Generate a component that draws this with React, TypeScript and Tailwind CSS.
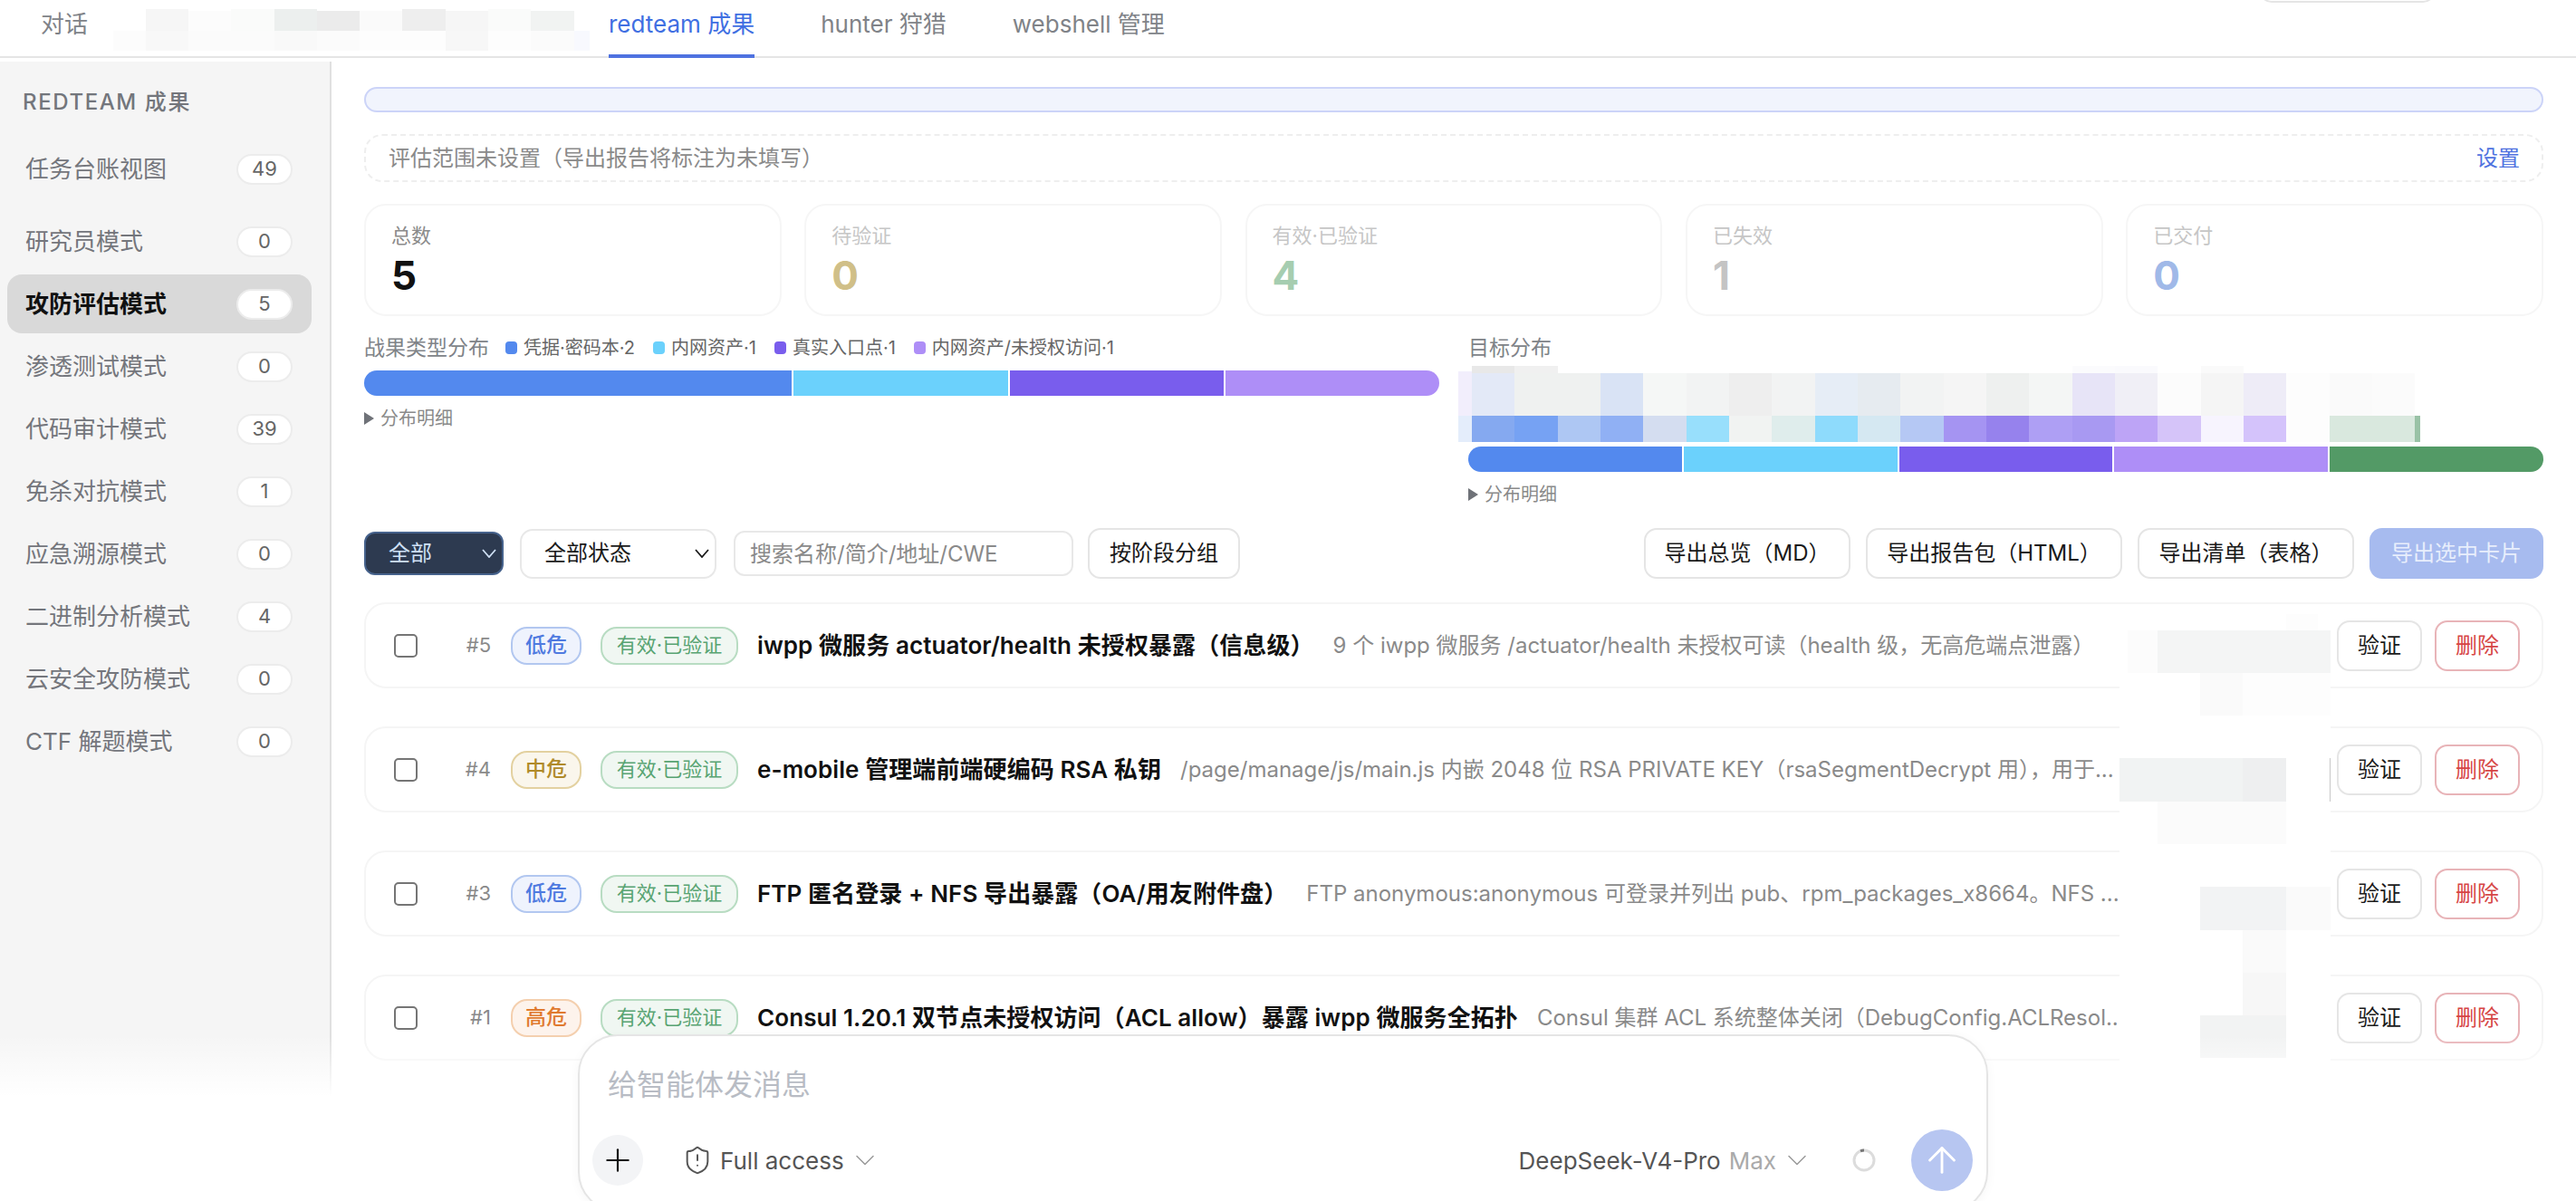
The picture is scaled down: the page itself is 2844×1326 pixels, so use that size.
import React from 'react';
import { ArrowUp, ChevronDown, Plus, ShieldAlert } from 'lucide-react';

type Rect = [number, number, number, number, string];

const MODES = [
  { name: '任务台账视图', count: 49 },
  { name: '研究员模式', count: 0 },
  { name: '攻防评估模式', count: 5, active: true },
  { name: '渗透测试模式', count: 0 },
  { name: '代码审计模式', count: 39 },
  { name: '免杀对抗模式', count: 1 },
  { name: '应急溯源模式', count: 0 },
  { name: '二进制分析模式', count: 4 },
  { name: '云安全攻防模式', count: 0 },
  { name: 'CTF 解题模式', count: 0 },
];

const STATS = [
  { label: '总数', value: 5, labelCls: 'text-[#8b8b8b]', valueCls: 'text-[#111111]' },
  { label: '待验证', value: 0, labelCls: 'text-[#c6c6c6]', valueCls: 'text-[#d0bf88]' },
  { label: '有效·已验证', value: 4, labelCls: 'text-[#c6c6c6]', valueCls: 'text-[#a6cdb0]' },
  { label: '已失效', value: 1, labelCls: 'text-[#c6c6c6]', valueCls: 'text-[#c4c4c4]' },
  { label: '已交付', value: 0, labelCls: 'text-[#c6c6c6]', valueCls: 'text-[#a0b9e8]' },
];

const LEGEND = [
  { label: '凭据·密码本·2', dot: 'bg-[#5389ee]' },
  { label: '内网资产·1', dot: 'bg-[#6bd1fc]' },
  { label: '真实入口点·1', dot: 'bg-[#795ded]' },
  { label: '内网资产/未授权访问·1', dot: 'bg-[#ae8ef7]' },
];

const SEVERITY = {
  low: { label: '低危', cls: 'bg-[#eff3fd] border-[#b2c7f0] text-[#4f7ae0]' },
  mid: { label: '中危', cls: 'bg-[#faf6ec] border-[#e3d1a0] text-[#b08a2a]' },
  high: { label: '高危', cls: 'bg-[#fdf3ec] border-[#f4cfae] text-[#e07a30]' },
};

const FINDINGS = [
  {
    id: 5,
    severity: SEVERITY.low,
    title: 'iwpp 微服务 actuator/health 未授权暴露（信息级）',
    desc: '9 个 iwpp 微服务 /actuator/health 未授权可读（health 级，无高危端点泄露）',
  },
  {
    id: 4,
    severity: SEVERITY.mid,
    title: 'e-mobile 管理端前端硬编码 RSA 私钥',
    desc: '/page/manage/js/main.js 内嵌 2048 位 RSA PRIVATE KEY（rsaSegmentDecrypt 用），用于...',
  },
  {
    id: 3,
    severity: SEVERITY.low,
    title: 'FTP 匿名登录 + NFS 导出暴露（OA/用友附件盘）',
    desc: 'FTP anonymous:anonymous 可登录并列出 pub、rpm_packages_x8664。NFS ...',
  },
  {
    id: 1,
    severity: SEVERITY.high,
    title: 'Consul 1.20.1 双节点未授权访问（ACL allow）暴露 iwpp 微服务全拓扑',
    desc: 'Consul 集群 ACL 系统整体关闭（DebugConfig.ACLResol...',
  },
];

const EXPORTS = [
  { label: '导出总览（MD）', cls: 'w-[228px]' },
  { label: '导出报告包（HTML）', cls: 'w-[283px]' },
  { label: '导出清单（表格）', cls: 'w-[239px]' },
];

// redacted patches: real coordinates of the page
const TAB_PATCH: Rect[] = [
  [160, 10, 47, 24, '#f6f6f6'],
  [207, 12, 47, 22, '#fcfcfc'],
  [254, 10, 48, 24, '#fafbfa'],
  [302, 10, 47, 24, '#ecefee'],
  [349, 12, 47, 22, '#ebebeb'],
  [396, 12, 47, 22, '#fafafa'],
  [443, 10, 48, 24, '#eeeeee'],
  [491, 12, 47, 22, '#f6f6f6'],
  [538, 10, 47, 24, '#fafbfa'],
  [585, 12, 48, 22, '#f1f3f2'],
  [124, 34, 36, 22, '#fcfcfc'],
  [160, 34, 47, 22, '#f8f8f8'],
  [207, 34, 95, 22, '#fbfbfb'],
  [302, 34, 47, 22, '#f9f9f9'],
  [349, 34, 47, 22, '#fbfbfb'],
  [396, 34, 95, 22, '#fdfdfd'],
  [491, 34, 47, 22, '#f7f7f7'],
  [538, 34, 47, 22, '#fdfdfd'],
  [585, 34, 48, 22, '#fbfbfb'],
  [633, 34, 17, 22, '#f8f9fe'],
];

const TARGET_TOP = ['#e3e9f7', '#eff1f0', '#eff1f0', '#d9e3f5', '#f5f7f6', '#f2f3f3', '#eeeeee', '#f2f3f3', '#e6edf6', '#e6ebf0', '#f2f3f3', '#f5f5f5', '#eef0ef', '#f4f6f5', '#e7e4f7', '#f0eff6', '#fcfcfc', '#f5f5f5', '#eeecf7', '#fdfdfd', '#fafafa', '#fbfbfb'];
const TARGET_BOTTOM = ['#85a9f0', '#76a2f3', '#aec7f3', '#90b0f4', '#d4ddf0', '#98dffc', '#f1f3f2', '#dfedec', '#8edbfc', '#d5e8f2', '#b5c8f4', '#a594f2', '#9682ed', '#ae9ff4', '#a899f2', '#bda4f6', '#d5c4f9', '#f7f4fe', '#d4c3fb', '#fdfdfd', '#d9e8de', '#d9e8de'];
const colX = (i: number) => 1625 + i * 47.33;
const TARGET_PATCH: Rect[] = [
  [1610, 410, 15, 49, '#f2eefc'],
  [1610, 459, 15, 29, '#e4edfb'],
  [colX(0), 404, 47.4, 8, '#e8e8e8'],
  [colX(1), 404, 47.4, 8, '#f0f0f0'],
  [colX(14), 404, 47.4, 8, '#fbfbfd'],
  [colX(15), 404, 47.4, 8, '#fafafd'],
  [colX(17), 404, 47.4, 8, '#fafafa'],
  ...TARGET_TOP.map((c, i): Rect => [colX(i), 412, 47.4, 47, c]),
  ...TARGET_BOTTOM.map((c, i): Rect => [colX(i), 459, 47.4, 29, c]),
  [2666, 459, 6, 29, '#99c2a6'],
];

const CARDS_PATCH: Rect[] = [
  [2340, 696, 233, 506, '#ffffff'],
  [2524, 678, 35, 18, '#fdfdfd'],
  [2349, 696, 33, 47, '#fcfcfc'],
  [2382, 696, 191, 47, '#f4f5f5'],
  [2429, 743, 47, 47, '#fafafa'],
  [2476, 743, 97, 47, '#fdfdfd'],
  [2340, 837, 136, 48, '#f1f3f3'],
  [2476, 837, 48, 48, '#eeeff0'],
  [2572, 837, 1, 48, '#c8c8c8'],
  [2382, 885, 142, 47, '#fbfbfb'],
  [2429, 979, 95, 48, '#f2f3f4'],
  [2524, 979, 49, 48, '#fafafa'],
  [2476, 1027, 48, 47, '#fafafa'],
  [2476, 1074, 48, 47, '#f7f7f7'],
  [2429, 1121, 95, 47, '#f2f3f3'],
];

function Patch({ rects, box, className }: { rects: Rect[]; box: string; className: string }) {
  return (
    <svg viewBox={box} className={className} shapeRendering="crispEdges" aria-hidden>
      {rects.map(([x, y, w, h, fill], i) => (
        <rect key={i} x={x} y={y} width={w} height={h} fill={fill} />
      ))}
    </svg>
  );
}

function SelectChevron() {
  return (
    <svg viewBox="0 0 16 10" className="h-[10px] w-[16px]" fill="none" stroke="currentColor" strokeWidth="1.8" aria-hidden>
      <path d="M1 1l7 8 7-8" />
    </svg>
  );
}

function Sidebar() {
  return (
    <aside className="w-[366px] shrink-0 border-r-2 border-[#e0e0e0] bg-[#f5f5f5] pl-[8px] pr-[20px] pt-[30px]">
      <div className="h-[30px] pl-[17px] text-[24px] leading-[30px] font-medium tracking-[1.6px] text-[#73767c]">REDTEAM 成果</div>
      <nav className="mt-[26px] flex flex-col gap-[4px]">
        {MODES.map((m, i) => (
          <div
            key={m.name}
            className={`flex h-[65px] items-center justify-between rounded-[16px] pl-[20px] pr-[21px] text-[26px] ${i === 0 ? 'mb-[11px]' : ''} ${
              m.active ? 'bg-[#d9d9d9] font-semibold text-[#111111]' : 'text-[#74767c]'
            }`}
          >
            <span>{m.name}</span>
            <span className="flex h-[34px] w-[62px] items-center justify-center rounded-full border-2 border-[#ececec] bg-white text-[22px] font-normal text-[#666666]">
              {m.count}
            </span>
          </div>
        ))}
      </nav>
    </aside>
  );
}

function StackedBar({ colors }: { colors: { cls: string; grow: string }[] }) {
  return (
    <div className="flex h-[28px] gap-[2px] overflow-hidden rounded-full">
      {colors.map((c, i) => (
        <div key={i} className={`${c.grow} ${c.cls}`} />
      ))}
    </div>
  );
}

function DetailToggle() {
  return (
    <div className="mt-[13px] flex h-[24px] items-center gap-[7px] text-[20px] text-[#8a8a8a]">
      <span className="h-0 w-0 border-y-[7px] border-l-[11px] border-y-transparent border-l-[#6f7278]" />
      分布明细
    </div>
  );
}

function FindingCard({ item }: { item: (typeof FINDINGS)[number] }) {
  return (
    <div className="flex h-[95px] shrink-0 items-center rounded-[24px] border-2 border-[#f5f5f5] bg-white pl-[31px] pr-[24px]">
      <input type="checkbox" className="h-[26px] w-[26px] shrink-0 appearance-none rounded-[5px] border-2 border-[#757575] bg-white" />
      <span className="w-[81px] shrink-0 text-right text-[22px] text-[#8a8a8a]">#{item.id}</span>
      <span className={`ml-[22px] flex h-[42px] w-[78px] shrink-0 items-center justify-center rounded-[18px] border-2 text-[23px] font-medium ${item.severity.cls}`}>
        {item.severity.label}
      </span>
      <span className="ml-[21px] flex h-[42px] w-[152px] shrink-0 items-center justify-center rounded-[18px] border-2 border-[#b8dcc2] bg-[#f0f7f2] text-[22px] text-[#58a472]">
        有效·已验证
      </span>
      <span className="ml-[21px] shrink-0 text-[26px] font-semibold tracking-[0.08px] text-[#111111]">{item.title}</span>
      <span className="ml-[21px] mr-[232px] min-w-0 flex-1 truncate text-[24px] text-[#8a8a8a]">{item.desc}</span>
      <div className="flex shrink-0 gap-[14px]">
        <button type="button" className="h-[56px] w-[94px] rounded-[14px] border-2 border-[#e5e5e5] bg-white text-[24px] text-[#1a1a1a]">
          验证
        </button>
        <button type="button" className="h-[56px] w-[94px] rounded-[14px] border-2 border-[#e8b4b8] bg-white text-[24px] text-[#d64545]">
          删除
        </button>
      </div>
    </div>
  );
}

function Composer() {
  return (
    <div className="absolute left-[638px] top-[1142px] z-20 flex h-[196px] w-[1557px] flex-col rounded-[44px] border-2 border-[#e5e5e5] bg-white shadow-[0_2px_12px_rgba(0,0,0,0.04)]">
      <textarea
        rows={1}
        readOnly
        placeholder="给智能体发消息"
        className="mt-[31px] ml-[31px] h-[46px] resize-none bg-transparent text-[32px] leading-[46px] outline-none placeholder:text-[#b8bcc4]"
      />
      <div className="mt-[26px] flex items-center pl-[14px] pr-[15px]">
        <button type="button" className="flex h-[56px] w-[56px] items-center justify-center rounded-full bg-[#f3f4f6] text-[#111111]">
          <Plus className="h-[40px] w-[40px]" strokeWidth={1.3} />
        </button>
        <ShieldAlert className="ml-[43px] h-[34px] w-[34px] text-[#555555]" strokeWidth={1.4} />
        <span className="ml-[8px] text-[26px] text-[#555555]">Full access</span>
        <ChevronDown className="ml-[5px] h-[36px] w-[36px] text-[#9a9a9a]" strokeWidth={1} />
        <div className="ml-auto flex items-center text-[26px]">
          <span className="text-[#555555]">DeepSeek-V4-Pro</span>
          <span className="ml-[9px] text-[#aaaaaa]">Max</span>
          <ChevronDown className="ml-[5px] h-[36px] w-[36px] text-[#9a9a9a]" strokeWidth={1} />
        </div>
        <svg viewBox="0 0 28 28" className="ml-[42px] h-[28px] w-[28px]" fill="none" aria-hidden>
          <circle cx="14" cy="14" r="11" stroke="#dcdcdc" strokeWidth="3" />
          <path d="M10 3.8a11 11 0 0 1 4-.8" stroke="#777777" strokeWidth="3" />
        </svg>
        <button type="button" className="ml-[38px] flex h-[68px] w-[68px] items-center justify-center rounded-full bg-[#b7c6f1] text-white">
          <ArrowUp className="h-[46px] w-[46px]" strokeWidth={1.5} />
        </button>
      </div>
    </div>
  );
}

export default function App() {
  return (
    <div className="relative flex h-screen w-full flex-col overflow-hidden bg-white [font-family:Inter,'Noto_Sans_CJK_SC',sans-serif]">
      {/* top tabs */}
      <header className="relative flex h-[64px] shrink-0 gap-[73px] border-b-2 border-[#e5e5e5] pl-[45px] text-[26px] text-[#808388]">
        <div className="flex h-[64px] items-center border-b-4 border-transparent pb-[8px]">对话</div>
        <div className="relative w-[429px]">
          <Patch rects={TAB_PATCH} box="124 10 526 46" className="absolute left-[-45px] top-[10px] h-[46px] w-[526px] max-w-none" />
        </div>
        <div className="flex h-[64px] items-center border-b-4 border-[#4f72e0] pb-[8px] text-[#3f6fe2]">redteam 成果</div>
        <div className="flex h-[64px] items-center border-b-4 border-transparent pb-[8px]">hunter 狩猎</div>
        <div className="flex h-[64px] items-center border-b-4 border-transparent pb-[8px]">webshell 管理</div>
        <div className="absolute left-[2494px] top-[-40px] h-[43px] w-[195px] rounded-[14px] border-2 border-[#e5e5e5]" />
      </header>

      <div className="mt-[4px] flex min-h-0 flex-1">
        <Sidebar />

        <main className="min-w-0 flex-1 overflow-hidden pl-[36px] pr-[36px] pt-[28px]">
          <div className="h-[28px] rounded-full border-2 border-[#ccd4f8] bg-[#f1f4fd]" />

          <div className="mt-[24px] flex h-[53px] items-center justify-between rounded-[20px] border-2 border-dashed border-[#eeeeee] pl-[25px] pr-[24px] text-[24px]">
            <span className="text-[#8a8a8a]">评估范围未设置（导出报告将标注为未填写）</span>
            <span className="text-[#4f72e0]">设置</span>
          </div>

          <div className="mt-[24px] grid h-[124px] grid-cols-5 gap-[25.5px]">
            {STATS.map(s => (
              <div key={s.label} className="rounded-[24px] border-2 border-[#f6f6f6] pl-[28px] pt-[20px]">
                <div className={`text-[22px] leading-[26px] ${s.labelCls}`}>{s.label}</div>
                <div className={`mt-[9px] text-[44px] leading-[44px] font-bold ${s.valueCls}`}>{s.value}</div>
              </div>
            ))}
          </div>

          <div className="mt-[23px] grid grid-cols-2 gap-x-[32px]">
            <div>
              <div className="flex h-[24px] items-center">
                <span className="mr-[18px] text-[23px] text-[#808388]">战果类型分布</span>
                {LEGEND.map(l => (
                  <span key={l.label} className="mr-[20px] flex items-center gap-[7px] text-[20px] text-[#666666]">
                    <span className={`h-[14px] w-[13px] rounded-[4px] ${l.dot}`} />
                    {l.label}
                  </span>
                ))}
              </div>
              <div className="mt-[13px]">
                <StackedBar
                  colors={[
                    { cls: 'bg-[#5389ee]', grow: 'flex-[2]' },
                    { cls: 'bg-[#6bd1fc]', grow: 'flex-1' },
                    { cls: 'bg-[#795ded]', grow: 'flex-1' },
                    { cls: 'bg-[#ae8ef7]', grow: 'flex-1' },
                  ]}
                />
              </div>
              <DetailToggle />
            </div>
            <div>
              <div className="flex h-[24px] items-center text-[23px] text-[#808388]">目标分布</div>
              <Patch rects={TARGET_PATCH} box="1610 404 1062 84" className="ml-[-11px] mt-[8px] h-[84px] w-[1062px] max-w-none" />
              <div className="mt-[5px]">
                <StackedBar
                  colors={[
                    { cls: 'bg-[#5389ee]', grow: 'flex-1' },
                    { cls: 'bg-[#6bd1fc]', grow: 'flex-1' },
                    { cls: 'bg-[#795ded]', grow: 'flex-1' },
                    { cls: 'bg-[#ae8ef7]', grow: 'flex-1' },
                    { cls: 'bg-[#539a66]', grow: 'flex-1' },
                  ]}
                />
              </div>
              <DetailToggle />
            </div>
          </div>

          {/* filters and exports */}
          <div className="mt-[25px] flex h-[56px] items-center text-[24px]">
            <button type="button" className="flex h-[48px] w-[154px] items-center justify-between rounded-[12px] border-2 border-[#46628c] bg-[#2d3a50] pl-[25px] pr-[6px] text-[#cfe0f5]">
              全部
              <SelectChevron />
            </button>
            <button type="button" className="ml-[18px] flex h-[55px] w-[217px] items-center justify-between rounded-[14px] border-2 border-[#e8e8e8] bg-white pl-[25px] pr-[6px] text-[#1a1a1a]">
              全部状态
              <SelectChevron />
            </button>
            <input
              placeholder="搜索名称/简介/地址/CWE"
              className="ml-[19px] h-[50px] w-[375px] rounded-[12px] border-2 border-[#e8e8e8] bg-white pl-[16px] outline-none placeholder:text-[#8a8a8a]"
            />
            <button type="button" className="ml-[16px] h-[56px] w-[168px] rounded-[14px] border-2 border-[#e5e5e5] bg-white text-[#1a1a1a]">
              按阶段分组
            </button>
            <div className="ml-auto flex gap-[17px]">
              {EXPORTS.map(b => (
                <button key={b.label} type="button" className={`h-[56px] rounded-[14px] border-2 border-[#e5e5e5] bg-white text-[#1a1a1a] ${b.cls}`}>
                  {b.label}
                </button>
              ))}
              <button type="button" className="h-[56px] w-[192px] rounded-[14px] bg-[#a7bbef] text-[#e8eefc]">
                导出选中卡片
              </button>
            </div>
          </div>

          <div className="mt-[26px] flex flex-col gap-[42px]">
            {FINDINGS.map(f => (
              <FindingCard key={f.id} item={f} />
            ))}
          </div>
        </main>
      </div>

      <Patch rects={CARDS_PATCH} box="2340 678 233 524" className="absolute left-[2340px] top-[678px] z-10 h-[524px] w-[233px]" />
      <div className="absolute inset-x-0 bottom-0 top-[1143px] z-10 bg-gradient-to-b from-white/0 to-white to-[37%]" />
      <Composer />
    </div>
  );
}
